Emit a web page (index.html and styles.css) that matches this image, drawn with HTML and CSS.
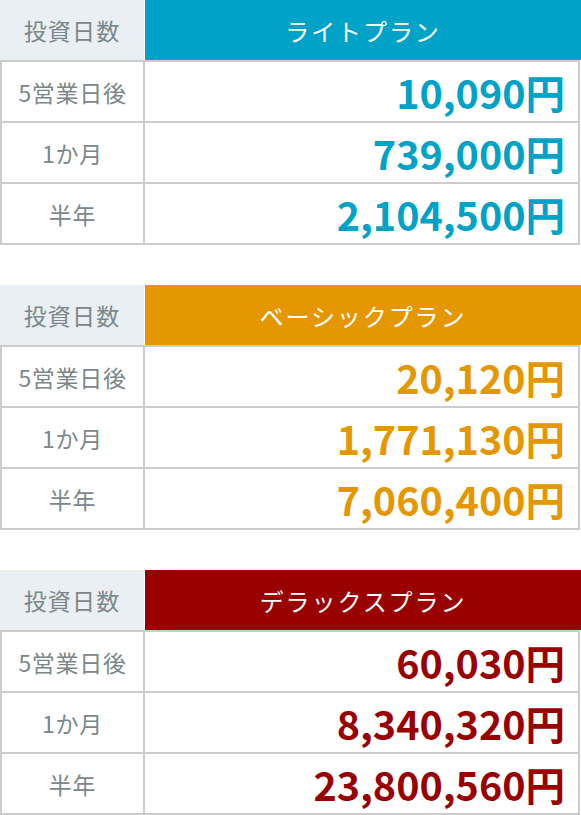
FILE: index.html
```html
<!DOCTYPE html>
<html lang="ja">
<head>
<meta charset="utf-8">
<link rel="stylesheet" href="styles.css">
</head>
<body>
<section class="plan plan-light">
  <div class="head">
    <div class="head-label">投資日数</div>
    <div class="head-name">ライトプラン</div>
  </div>
  <div class="body">
    <div class="label">5営業日後</div><div class="value">10,090円</div>
    <div class="label">1か月</div><div class="value">739,000円</div>
    <div class="label">半年</div><div class="value">2,104,500円</div>
  </div>
</section>
<section class="plan plan-basic">
  <div class="head">
    <div class="head-label">投資日数</div>
    <div class="head-name">ベーシックプラン</div>
  </div>
  <div class="body">
    <div class="label">5営業日後</div><div class="value">20,120円</div>
    <div class="label">1か月</div><div class="value">1,771,130円</div>
    <div class="label">半年</div><div class="value">7,060,400円</div>
  </div>
</section>
<section class="plan plan-deluxe">
  <div class="head">
    <div class="head-label">投資日数</div>
    <div class="head-name">デラックスプラン</div>
  </div>
  <div class="body">
    <div class="label">5営業日後</div><div class="value">60,030円</div>
    <div class="label">1か月</div><div class="value">8,340,320円</div>
    <div class="label">半年</div><div class="value">23,800,560円</div>
  </div>
</section>
</body>
</html>
```

FILE: styles.css
```css
html, body {
  margin: 0;
  padding: 0;
  background: #ffffff;
}
body {
  width: 581px;
  font-family: "Noto Sans CJK JP", "Noto Sans", sans-serif;
}
.plan {
  margin-bottom: 40px;
}
.head {
  display: grid;
  grid-template-columns: 144px 1fr;
  column-gap: 1px;
  height: 60px;
}
.head-label {
  background: #e9eff2;
  color: #7b8788;
  font-size: 23px;
  display: flex;
  align-items: center;
  justify-content: center;
  letter-spacing: 0.05em;
}
.head-name {
  color: #ffffff;
  font-size: 24px;
  letter-spacing: 0.08em;
  display: flex;
  align-items: center;
  justify-content: center;
}
.plan-light .head-name { background: #00a2c7; }
.plan-basic .head-name { background: #e49700; }
.plan-deluxe .head-name { background: #990000; }
.body {
  width: 580px;
  box-sizing: border-box;
  display: grid;
  grid-template-columns: 141px 1fr;
  grid-auto-rows: 59px;
  gap: 2px;
  padding: 2px;
  background: #cccccc;
}
.label, .value {
  background: #ffffff;
  display: flex;
  align-items: center;
}
.label {
  justify-content: center;
  color: #7b8788;
  font-size: 23px;
  letter-spacing: 0.03em;
}
.value {
  justify-content: flex-end;
  padding-right: 13px;
  font-size: 39.5px;
  font-weight: 700;
}
.plan-light .value { color: #00a2c7; }
.plan-basic .value { color: #e49700; }
.plan-deluxe .value { color: #990000; }
```
